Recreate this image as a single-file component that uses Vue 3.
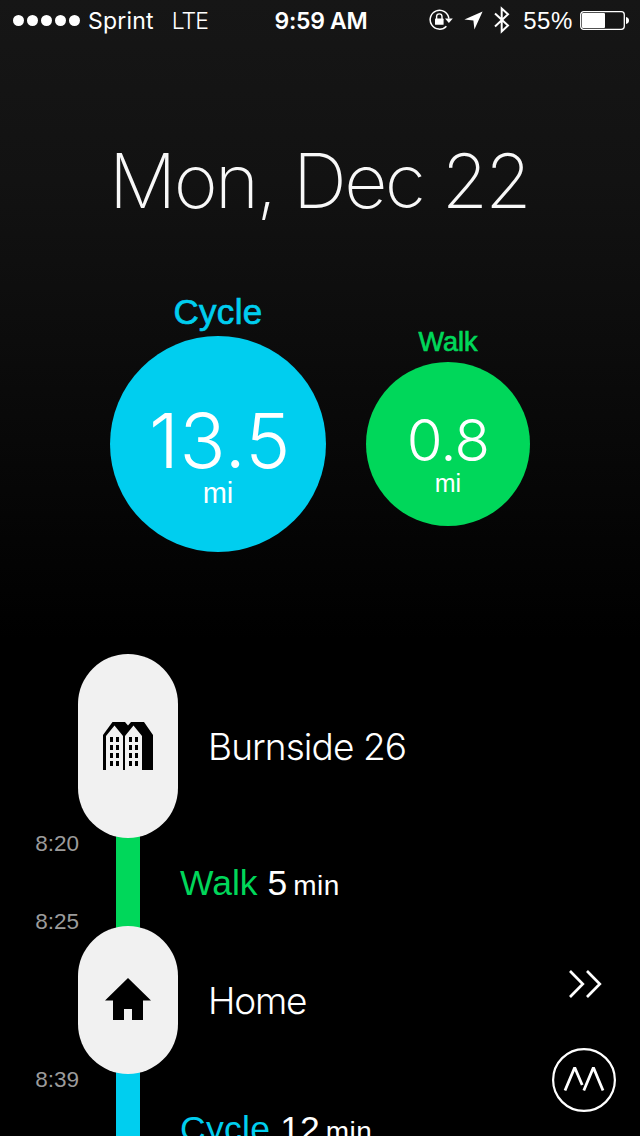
<template>
  <div class="screen">
    <header class="status">
      <div class="status-left">
        <div class="signal">
          <i v-for="n in 5" :key="n"></i>
        </div>
        <span class="carrier">Sprint</span>
        <span class="network">LTE</span>
      </div>
      <div class="clock">9:59 AM</div>
      <div class="status-right">
        <!-- rotation lock -->
        <svg class="icon-lock" width="24" height="22" viewBox="0 0 24 22">
          <path d="M17.4 17.2 A9.4 9.4 0 1 1 19.9 9.6" fill="none" stroke="#fff" stroke-width="1.5" />
          <path d="M16 9.5 H23.8 L19.9 14 Z" fill="#fff" />
          <rect x="6" y="9.6" width="8.6" height="6.2" rx="0.6" fill="#fff" />
          <path d="M7.6 10 V7.6 A2.7 2.7 0 0 1 13 7.6 V10" fill="none" stroke="#fff" stroke-width="1.4" />
        </svg>
        <!-- location arrow -->
        <svg class="icon-arrow" width="19" height="19" viewBox="0 0 19 19">
          <path d="M18.6 0.4 L10.4 18.4 L9.4 9.6 L0.4 8.6 Z" fill="#fff" />
        </svg>
        <!-- bluetooth -->
        <svg class="icon-bt" width="16" height="28" viewBox="0 0 16 28">
          <path d="M1 7.4 L14 19.6 L7.7 25.4 V2.6 L14 8.2 L1 20.4" fill="none" stroke="#fff" stroke-width="2" />
        </svg>
        <span class="percent">55%</span>
        <!-- battery -->
        <svg class="icon-battery" width="49" height="19" viewBox="0 0 49 19">
          <rect x="0.7" y="0.7" width="43.6" height="17.6" rx="3" fill="none" stroke="#fff" stroke-width="1.3" />
          <rect x="2" y="2" width="23" height="15" rx="1" fill="#fff" />
          <path d="M46 6 Q49 6.6 49 9.5 Q49 12.4 46 13 Z" fill="#fff" />
        </svg>
      </div>
    </header>

    <h1 class="date">Mon, Dec 22</h1>

    <section class="summary">
      <div v-for="item in summary" :key="item.name" class="activity" :class="item.type">
        <div class="activity-name">{{ item.name }}</div>
        <div class="bubble">
          <div class="distance">{{ item.distance }}</div>
          <div class="unit">mi</div>
        </div>
      </div>
    </section>

    <section class="timeline">
      <template v-for="(row, index) in rows" :key="index">
        <div v-if="row.kind === 'place'" class="place">
          <div class="pill" :class="row.icon">
            <svg v-if="row.icon === 'office'" width="50" height="48" viewBox="0 0 50 48">
              <path d="M0 48 V13 L9.5 0 H22 L25 3.4 L28 0 H41 L50 13 V48 H39 V14 L30.5 3.5 L22 14 V48 H20 V14 L11.5 3.5 L3 14 V48 Z" fill="#000" />
              <g fill="#000">
                <template v-for="y in [15, 23, 31, 39]" :key="y">
                  <rect v-for="x in [7, 13, 26, 32]" :key="x" :x="x" :y="y" width="3" height="5" />
                </template>
              </g>
            </svg>
            <svg v-else width="46" height="42" viewBox="0 0 46 42">
              <path d="M23 0 L46 22.5 H38 V42 H27 V31 H19 V42 H8 V22.5 H0 Z" fill="#000" />
            </svg>
          </div>
          <div class="place-name" :class="row.icon">{{ row.name }}</div>
        </div>
        <div v-else class="move" :class="row.type">
          <div class="times">
            <span>{{ row.start }}</span>
            <span>{{ row.end }}</span>
          </div>
          <div class="track"></div>
          <div class="move-text">
            <span class="move-name">{{ row.name }}</span>
            <span class="move-count">{{ row.minutes }}</span>
            <span class="move-unit">min</span>
          </div>
        </div>
      </template>
    </section>

    <nav class="floating">
      <svg width="36" height="30" viewBox="0 0 36 30">
        <path d="M4 2 L16.8 15 L4 28 M21 2 L33.8 15 L21 28" fill="none" stroke="#fff" stroke-width="2.7" />
      </svg>
      <svg width="64" height="64" viewBox="0 0 64 64">
        <circle cx="32" cy="32" r="30.9" fill="#000" stroke="#fff" stroke-width="2.2" />
        <path d="M13 42.5 L22.7 19.5 L30.2 37 M31.8 42.5 L41.4 19.5 L51 42.5" fill="none" stroke="#fff" stroke-width="2.8" stroke-linejoin="bevel" />
      </svg>
    </nav>
  </div>
</template>

<script setup>
import { ref } from 'vue'

const summary = ref([
  { name: 'Cycle', type: 'cycle', distance: '13.5' },
  { name: 'Walk', type: 'walk', distance: '0.8' }
])

const rows = ref([
  { kind: 'place', icon: 'office', name: 'Burnside 26' },
  { kind: 'move', type: 'walk', name: 'Walk', minutes: 5, start: '8:20', end: '8:25' },
  { kind: 'place', icon: 'home', name: 'Home' },
  { kind: 'move', type: 'cycle', name: 'Cycle', minutes: 12, start: '8:39', end: '' }
])
</script>

<style>
body {
  margin: 0;
  background: #000;
}
</style>

<style scoped>
.screen {
  position: relative;
  width: 640px;
  height: 1136px;
  overflow: hidden;
  background: linear-gradient(#161616 0, #121212 180px, #0c0c0c 340px, #000 640px);
  color: #fff;
  font-family: Inter, "Liberation Sans", sans-serif;
}
svg {
  display: block;
  flex: none;
}
.status {
  display: grid;
  grid-template-columns: 1fr auto 1fr;
  align-items: center;
  height: 40px;
  padding: 0 11px 0 13px;
  font-size: 23px;
  line-height: 40px;
  white-space: nowrap;
}
.status-left,
.status-right {
  display: flex;
  align-items: center;
}
.status-right {
  justify-content: flex-end;
}
.signal {
  display: flex;
  gap: 3px;
}
.signal i {
  width: 11px;
  height: 11px;
  border-radius: 50%;
  background: #fff;
}
.carrier,
.network,
.clock,
.percent {
  padding-top: 2px;
  line-height: 38px;
}
.carrier {
  margin-left: 8px;
  letter-spacing: 0.2px;
}
.network {
  margin-left: 18px;
  font-weight: 300;
  letter-spacing: -0.9px;
}
.clock {
  font-weight: 600;
  letter-spacing: -0.3px;
}
.icon-arrow {
  margin-left: 11px;
}
.icon-bt {
  margin-left: 11px;
}
.percent {
  margin-left: 13px;
  font-family: "Liberation Sans", sans-serif;
  font-size: 24px;
  letter-spacing: 0.6px;
}
.icon-battery {
  margin-left: 7px;
}
.date {
  margin: 97px 0 0;
  height: 90px;
  line-height: 88px;
  padding-right: 2px;
  text-align: center;
  font-size: 75px;
  font-weight: 200;
  letter-spacing: -2.6px;
  color: #f8f8f8;
}
.summary {
  display: flex;
  justify-content: center;
  align-items: center;
  gap: 40px;
  height: 326px;
  margin-top: 54px;
}
.activity {
  display: flex;
  flex-direction: column;
  align-items: center;
}
.activity-name {
  font-family: "Liberation Sans", sans-serif;
  -webkit-text-stroke: 0.7px currentColor;
}
.bubble {
  display: flex;
  flex-direction: column;
  align-items: center;
  border-radius: 50%;
}
.cycle .bubble {
  width: 216px;
  height: 216px;
  margin-bottom: 48px;
  background: #00ceef;
}
.walk .bubble {
  width: 164px;
  height: 164px;
  margin-bottom: 36px;
  background: #00d75a;
}
.cycle .activity-name {
  height: 48px;
  line-height: 48px;
  font-size: 35px;
  letter-spacing: 0.3px;
  color: #00ceef;
}
.walk .activity-name {
  height: 36px;
  line-height: 33px;
  font-size: 27px;
  color: #00d75a;
}
.distance {
  font-weight: 280;
}
.cycle .distance {
  margin-top: 64px;
  height: 80px;
  line-height: 80px;
  padding-left: 4px;
  font-size: 76px;
  letter-spacing: 0.6px;
}
.walk .distance {
  margin-top: 48px;
  height: 60px;
  line-height: 60px;
  font-size: 58px;
  letter-spacing: -0.8px;
}
.unit {
  font-family: "Liberation Sans", sans-serif;
}
.cycle .unit {
  line-height: 26px;
  font-size: 29px;
}
.walk .unit {
  line-height: 26px;
  font-size: 25px;
}
.timeline {
  margin-top: 47px;
}
.place {
  position: relative;
  z-index: 1;
  display: flex;
  align-items: center;
  padding-left: 78px;
}
.pill {
  display: flex;
  align-items: center;
  justify-content: center;
  width: 100px;
  border-radius: 50px;
  background: #f1f1f1;
}
.pill.office {
  height: 184px;
}
.pill.home {
  height: 148px;
}
.pill.home svg {
  margin-top: -2px;
}
.place-name {
  margin-left: 30px;
  font-size: 37px;
  font-weight: 300;
  letter-spacing: -0.9px;
}
.place-name.home {
  letter-spacing: -1.2px;
}
/* the track runs a little under the pills on both ends */
.move {
  display: flex;
  height: 88px;
}
.times {
  display: flex;
  flex-direction: column;
  justify-content: space-between;
  width: 79px;
  margin: -6px 0 -8px;
  font-family: "Liberation Sans", sans-serif;
  font-size: 22.5px;
  line-height: 24px;
  text-align: right;
  color: #9b9b9b;
}
.track {
  width: 24px;
  margin: -14px 0 -14px 37px;
}
.walk .track {
  background: #00d75a;
}
.cycle .track {
  background: #00ceef;
}
.move-text {
  display: flex;
  align-items: baseline;
  margin-left: 40px;
  font-family: "Liberation Sans", sans-serif;
  font-size: 35.5px;
  line-height: 90px;
}
.move.cycle {
  height: 108px;
}
.move.cycle .move-text {
  line-height: 110px;
}
.walk .move-name {
  color: #00d75a;
}
.cycle .move-name {
  color: #00ceef;
}
.move.cycle .move-name {
  letter-spacing: 0.3px;
}
.move-count {
  margin-left: 10px;
}
.move-unit {
  margin-left: 6px;
  font-size: 28px;
  letter-spacing: 0.4px;
}
.floating {
  position: absolute;
  right: 24px;
  bottom: 24px;
  z-index: 2;
  display: flex;
  flex-direction: column;
  align-items: center;
  gap: 49px;
}
</style>
